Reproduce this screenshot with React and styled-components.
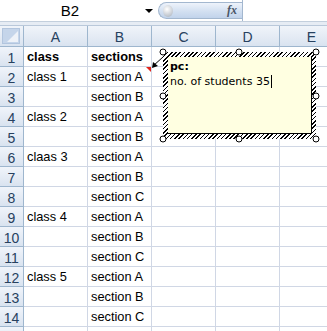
import React from 'react'
import styled, {createGlobalStyle} from 'styled-components'

const Global = createGlobalStyle`
    body {
        margin: 0;
        background: #fff;
        overflow: hidden;
        font-family: "Liberation Sans", Arial, sans-serif;
    }
`

const Window = styled.div`
    width: 327px;
    height: 331px;
    overflow: hidden;
    position: relative;
    background: #fff;
`

const FormulaBar = styled.div`
    display: flex;
    align-items: center;
    height: 21px;
    border-bottom: 1px solid #c3cfdd;
    background: #fff;
`

const NameBox = styled.div`
    width: 156px;
    height: 21px;
    display: flex;
    align-items: center;
    position: relative;
    font-size: 15px;
    color: #000;

    span {
        width: 140px;
        text-align: center;
    }
`

const DropArrow = styled.i`
    position: absolute;
    left: 145px;
    top: 9px;
    width: 0;
    height: 0;
    border-left: 4px solid transparent;
    border-right: 4px solid transparent;
    border-top: 4px solid #000;
`

const FxPill = styled.div`
    width: 84px;
    height: 17px;
    margin-left: 2px;
    border: 1px solid #a3b7cf;
    border-right: none;
    border-radius: 9px 0 0 9px;
    background: linear-gradient(#eef3fb, #d3e0f1 55%, #c1d3eb);
    display: flex;
    align-items: center;
    justify-content: space-between;
    padding: 0 5px 0 4px;
    box-sizing: border-box;
`

const Bubble = styled.i`
    width: 10px;
    height: 12px;
    border-radius: 50%;
    background: radial-gradient(circle at 40% 35%, #fff, #c9ced5 60%, #a7afba);
`

const Fx = styled.span`
    font-family: "Liberation Serif", serif;
    font-style: italic;
    font-weight: bold;
    font-size: 12px;
    color: #4a5566;
`

const Input = styled.div`
    flex: 1;
    height: 21px;
    border-left: 1px solid #a3b7cf;
`

const Band = styled.div`
    height: 3px;
    background: #e6ecf4;
    border-bottom: 1px solid #b9c8da;
`

const Sheet = styled.div`
    position: relative;
    display: grid;
    grid-template-columns: 24px 64px 64px 64px 64px 64px;
    grid-template-rows: 21px;
    grid-auto-rows: 20px;
`

const Head = styled.div`
    box-sizing: border-box;
    border-right: 1px solid #9eb6ce;
    border-bottom: 1px solid #9eb6ce;
    background: linear-gradient(#f0f4fa, #e3eaf4 60%, #d9e3f0);
    color: #27415f;
    font-size: 14px;
    display: flex;
    align-items: center;
    justify-content: center;
    padding-top: 2px;
`

const Corner = styled(Head)`
    position: relative;
    padding: 0;

    &::before {
        content: "";
        position: absolute;
        inset: 2px 3px 2px 2px;
        background: #c5d5ea;
        border: 1px solid #b2c5de;
    }

    &::after {
        content: "";
        position: absolute;
        right: 5px;
        bottom: 4px;
        border-left: 11px solid transparent;
        border-bottom: 11px solid #eef2f8;
    }
`

const Cell = styled.div`
    box-sizing: border-box;
    border-right: 1px solid #d0d7e5;
    border-bottom: 1px solid #d0d7e5;
    font-size: 12.8px;
    font-weight: ${p => (p.$bold ? 'bold' : 'normal')};
    color: #000;
    white-space: nowrap;
    display: flex;
    align-items: flex-end;
    padding: 0 0 2px 3px;
    position: relative;
`

const Marker = styled.i`
    position: absolute;
    right: 0;
    top: 0;
    border-left: 5px solid transparent;
    border-top: 5px solid #e2231a;
`

const Leader = styled.svg`
    position: absolute;
    left: 148px;
    top: 28px;
`

const Frame = styled.div`
    position: absolute;
    left: 163px;
    top: 26px;
    width: 153px;
    height: 87px;
    box-sizing: border-box;
    padding: 5px 4px 5px 5px;
    background: repeating-linear-gradient(135deg, #000 0 1.1px, #fff 1.1px 3px);
`

const Note = styled.div`
    height: 100%;
    box-sizing: border-box;
    background: #ffffe1;
    border-right: 1px solid #000;
    border-bottom: 1px solid #000;
    padding: 2px 2px;
    font-family: "DejaVu Sans", Tahoma, sans-serif;
    font-size: 11px;
    line-height: 15px;
    color: #000;

    b {
        display: block;
    }
`

const Caret = styled.i`
    display: inline-block;
    width: 1px;
    height: 13px;
    background: #000;
    vertical-align: -3px;
    margin-left: 1px;
`

const Handle = styled.i`
    position: absolute;
    width: 7px;
    height: 7px;
    box-sizing: border-box;
    border: 1px solid #000;
    border-radius: 50%;
    background: #fff;
    left: ${p => p.$x}px;
    top: ${p => p.$y}px;
    transform: translate(-50%, -50%);
`

const rows = [
    ['class', 'sections'],
    ['class 1', 'section A'],
    ['', 'section B'],
    ['class 2', 'section A'],
    ['', 'section B'],
    ['claas 3', 'section A'],
    ['', 'section B'],
    ['', 'section C'],
    ['class 4', 'section A'],
    ['', 'section B'],
    ['', 'section C'],
    ['class 5', 'section A'],
    ['', 'section B'],
    ['', 'section C'],
    ['', ''],
]

const handles = [
    [0, 0], [76, 0], [153, 0],
    [0, 44], [153, 44],
    [0, 87], [76, 87], [153, 87],
]

const App = () => {
    return (
        <Window>
            <Global />
            <FormulaBar>
                <NameBox>
                    <span>B2</span>
                    <DropArrow />
                </NameBox>
                <FxPill>
                    <Bubble />
                    <Fx>fx</Fx>
                </FxPill>
                <Input />
            </FormulaBar>
            <Band />
            <Sheet>
                <Corner />
                {['A', 'B', 'C', 'D', 'E'].map(c => <Head key={c}>{c}</Head>)}
                {rows.map((r, i) => (
                    <React.Fragment key={i}>
                        <Head>{i < 14 ? i + 1 : ''}</Head>
                        <Cell $bold={i === 0}>{r[0]}</Cell>
                        <Cell $bold={i === 0}>
                            {r[1]}
                            {i === 1 && <Marker />}
                        </Cell>
                        <Cell />
                        <Cell />
                        <Cell />
                    </React.Fragment>
                ))}
                <Leader width="20" height="16" viewBox="0 0 20 16">
                    <line x1="5" y1="12" x2="15" y2="3" stroke="#000" strokeWidth="1" />
                    <polygon points="4,14 5,8 10,12" fill="#000" />
                </Leader>
                <Frame>
                    <Note>
                        <b>pc:</b>
                        no. of students 35<Caret />
                    </Note>
                    {handles.map(([x, y], i) => <Handle key={i} $x={x} $y={y} />)}
                </Frame>
            </Sheet>
        </Window>
    )
}

export default App
